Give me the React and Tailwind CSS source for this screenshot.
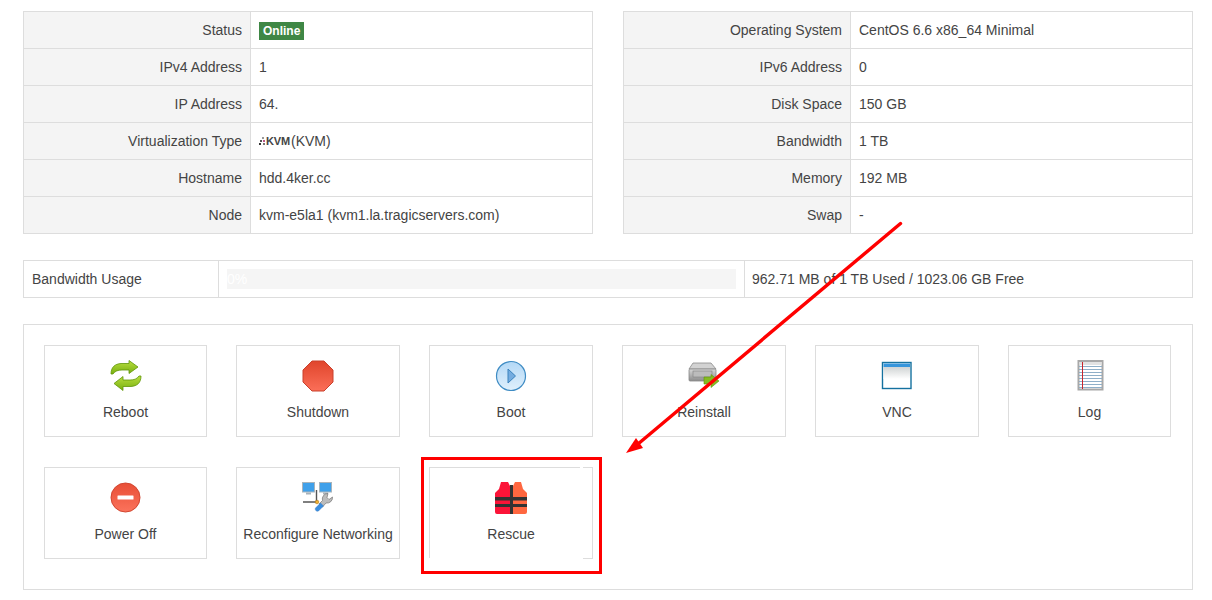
import React from "react";

const leftRows = [
  ["Status", <span className="inline-block bg-[#3f8745] px-[4px] text-[12px] leading-[18px] font-bold text-white">Online</span>],
  ["IPv4 Address", "1"],
  ["IP Address", "64."],
  ["Virtualization Type", <span className="flex items-center"><KvmLogo />(KVM)</span>],
  ["Hostname", "hdd.4ker.cc"],
  ["Node", "kvm-e5la1 (kvm1.la.tragicservers.com)"],
];

const rightRows = [
  ["Operating System", "CentOS 6.6 x86_64 Minimal"],
  ["IPv6 Address", "0"],
  ["Disk Space", "150 GB"],
  ["Bandwidth", "1 TB"],
  ["Memory", "192 MB"],
  ["Swap", "-"],
];

function KvmLogo() {
  return (
    <span className="flex w-[32px] items-center">
      <svg width="7" height="10" viewBox="0 0 7 10">
        <rect x="3" y="1" width="2" height="2" fill="#999" />
        <rect x="1" y="4" width="2" height="2" fill="#555" />
        <rect x="4" y="4" width="2" height="2" fill="#b58" />
        <rect x="0" y="7" width="2" height="2" fill="#333" />
        <rect x="4" y="7" width="2" height="2" fill="#777" />
      </svg>
      <span className="text-[11px] font-bold tracking-[-0.2px] text-[#444]">KVM</span>
    </span>
  );
}

function InfoTable({ rows }) {
  return (
    <table className="w-[570px] shrink-0 table-fixed border-collapse">
      <tbody>
        {rows.map(([label, value]) => (
          <tr key={label} className="h-[37px]">
            <td className="w-[227px] border border-[#ddd] bg-[#f4f4f4] pr-2 text-right">{label}</td>
            <td className="border border-[#ddd] pl-2">{value}</td>
          </tr>
        ))}
      </tbody>
    </table>
  );
}

function RebootIcon() {
  return (
    <svg width="32" height="32" viewBox="0 0 32 32">
      <defs>
        <linearGradient id="rb" x1="0" y1="0" x2="0" y2="1">
          <stop offset="0" stopColor="#b9de3e" />
          <stop offset="1" stopColor="#78b010" />
        </linearGradient>
      </defs>
      <path d="M1 14 C1 7 5 4 11 3.5 L19 3.5 L19 0.5 L28 7 L19 13.5 L19 10 L12 10 C8 10 5 11 3 14 Z" fill="url(#rb)" stroke="#5f9608" strokeWidth="0.8" />
      <path d="M31 16 C31 23 27 26 21 26.5 L13 26.5 L13 30.5 L4 23.5 L13 16.5 L13 20 L20 20 C24 20 27 19 29 16 Z" fill="url(#rb)" stroke="#5f9608" strokeWidth="0.8" />
    </svg>
  );
}

function ShutdownIcon() {
  return (
    <svg width="32" height="32" viewBox="0 0 32 32">
      <defs>
        <linearGradient id="sd" x1="0" y1="0" x2="0" y2="1">
          <stop offset="0" stopColor="#e0452c" />
          <stop offset="1" stopColor="#fb6f58" />
        </linearGradient>
      </defs>
      <path d="M10 1 L22 1 L31 10 L31 22 L22 31 L10 31 L1 22 L1 10 Z" fill="url(#sd)" stroke="#c9402c" strokeWidth="1" />
    </svg>
  );
}

function BootIcon() {
  return (
    <svg width="32" height="32" viewBox="0 0 32 32">
      <defs>
        <linearGradient id="bt" x1="0" y1="0" x2="0" y2="1">
          <stop offset="0" stopColor="#b3d8f6" />
          <stop offset="1" stopColor="#e0f0fc" />
        </linearGradient>
      </defs>
      <circle cx="16" cy="16" r="14.5" fill="url(#bt)" stroke="#3f8cc4" strokeWidth="1.2" />
      <path d="M13 9 L20.5 16 L13 23 Z" fill="#74ace0" stroke="#3a82bc" strokeWidth="1" />
    </svg>
  );
}

function ReinstallIcon() {
  return (
    <svg width="32" height="32" viewBox="0 0 32 32">
      <defs>
        <linearGradient id="ri" x1="0" y1="0" x2="0" y2="1">
          <stop offset="0" stopColor="#d8d8d8" />
          <stop offset="1" stopColor="#8c8c8c" />
        </linearGradient>
      </defs>
      <path d="M5 3 L23 3 L28 9 L1 9 Z" fill="#d2d2d2" stroke="#8c8c8c" strokeWidth="0.8" />
      <rect x="1" y="9" width="27" height="12" rx="1" fill="url(#ri)" stroke="#888" strokeWidth="0.8" />
      <rect x="5" y="11" width="19" height="6" fill="#bcbcbc" stroke="#808080" strokeWidth="0.6" />
      <path d="M16 17 L23 17 L23 14.5 L31 21 L23 27.5 L23 24 L16 24 Z" fill="#86bb22" stroke="#5f9608" strokeWidth="0.6" />
    </svg>
  );
}

function VncIcon() {
  return (
    <svg width="32" height="32" viewBox="0 0 32 32">
      <defs>
        <linearGradient id="vn" x1="0" y1="0" x2="0" y2="1">
          <stop offset="0" stopColor="#d0d4d4" />
          <stop offset="1" stopColor="#ffffff" />
        </linearGradient>
      </defs>
      <rect x="1.5" y="2.5" width="28.5" height="26" fill="#fff" stroke="#14719f" strokeWidth="1.4" />
      <rect x="2.5" y="3.5" width="26.5" height="3.5" fill="#3796dc" />
      <rect x="2.5" y="7" width="26.5" height="12" fill="url(#vn)" />
    </svg>
  );
}

function LogIcon() {
  const lines = [6, 9, 12, 15, 18, 21, 24, 27];
  return (
    <svg width="32" height="32" viewBox="0 0 32 32">
      <rect x="4.5" y="1" width="24" height="28.5" fill="#fff" stroke="#a8a8a8" strokeWidth="2" />
      <rect x="5.5" y="2" width="22" height="3" fill="#e2e2e2" />
      {lines.map((y) => (
        <rect key={y} x="5" y={y} width="23" height="1" fill="#8fafc8" />
      ))}
      <rect x="8" y="2" width="1" height="27" fill="#c8252c" />
    </svg>
  );
}

function PowerOffIcon() {
  return (
    <svg width="32" height="32" viewBox="0 0 32 32">
      <defs>
        <linearGradient id="po" x1="0" y1="0" x2="0" y2="1">
          <stop offset="0" stopColor="#e84e36" />
          <stop offset="1" stopColor="#fb735c" />
        </linearGradient>
      </defs>
      <circle cx="15.5" cy="15.5" r="14.5" fill="url(#po)" stroke="#d24630" strokeWidth="1" />
      <rect x="7.5" y="13.5" width="16" height="4" rx="0.5" fill="#fff" />
    </svg>
  );
}

function NetworkIcon() {
  return (
    <svg width="32" height="32" viewBox="0 0 32 32">
      <path d="M14.5 8 L14.5 20 M1 20 L15 20" stroke="#555" strokeWidth="1.4" fill="none" />
      <rect x="0.5" y="0.5" width="12" height="9.5" fill="#3fa0ea" stroke="#a8b4bc" strokeWidth="1" />
      <rect x="17.5" y="0.5" width="12" height="9.5" fill="#3fa0ea" stroke="#a8b4bc" strokeWidth="1" />
      <rect x="4" y="10.5" width="5" height="2" fill="#a8b2ba" />
      <rect x="21" y="10.5" width="5" height="2" fill="#a8b2ba" />
      <circle cx="15" cy="20" r="1.8" fill="#f0b030" stroke="#b07818" strokeWidth="0.6" />
      <path d="M26 11.5 A5.5 5.5 0 0 0 20.5 18.5 L17 22 L20.5 25 L24 21 A5.5 5.5 0 0 0 30.5 15 L27 17.5 L25 15.5 Z" fill="#bcbcbc" stroke="#777" strokeWidth="0.7" />
      <path d="M18.5 21 L13.5 26 C12.5 28 14.5 30 16.5 29 L21.5 24 Z" fill="#3a8ee0" stroke="#2f74bc" strokeWidth="0.4" />
    </svg>
  );
}

function VestIcon() {
  return (
    <svg width="32" height="32" viewBox="0 0 32 32">
      <path d="M6 0 L13 0 L15 4 L15 32 L2 32 Q0 32 0 30 L0 11 L4 7 Z" fill="#fb1438" />
      <path d="M26 0 L20 0 L18 4 L18 32 L30 32 Q32 32 32 30 L32 11 L28 7 Z" fill="#ff6740" />
      <rect x="15" y="3" width="3" height="29" fill="#333" />
      <rect x="0" y="15" width="32" height="3.5" fill="#333" />
      <rect x="0" y="22" width="32" height="3" fill="#333" />
    </svg>
  );
}

const actions = [
  ["Reboot", RebootIcon],
  ["Shutdown", ShutdownIcon],
  ["Boot", BootIcon],
  ["Reinstall", ReinstallIcon],
  ["VNC", VncIcon],
  ["Log", LogIcon],
  ["Power Off", PowerOffIcon],
  ["Reconfigure Networking", NetworkIcon],
  ["Rescue", VestIcon],
];

function ActionButton({ label, Icon }) {
  return (
    <div className="relative flex h-[92px] flex-col items-center border border-[#ddd] pt-[14px]">
      <Icon />
      <span className="mt-[10px] leading-[20px] whitespace-nowrap">{label}</span>
      {/* screenshot markup clips the border of this one */}
      {label === "Rescue" && (
        <>
          <span className="absolute top-[-1px] right-[9px] h-px w-[3px] bg-white" />
          <span className="absolute bottom-[-1px] left-[-1px] h-px w-[154px] bg-white" />
        </>
      )}
    </div>
  );
}

export default function App() {
  return (
    <div className="relative h-[600px] overflow-hidden bg-white pt-[11px] pl-[23px] font-['Liberation_Sans',Arial,sans-serif] text-[14px] text-[#444]">
      <div className="flex gap-[30px]">
        <InfoTable rows={leftRows} />
        <InfoTable rows={rightRows} />
      </div>

      <div className="mt-[26px] flex h-[38px] w-[1170px] items-center border border-[#ddd]">
        <div className="flex h-full w-[195px] items-center border-r border-[#ddd] pl-2">Bandwidth Usage</div>
        <div className="flex h-full w-[526px] items-center border-r border-[#ddd] pl-2">
          <div className="h-[20px] w-[509px] bg-[#f5f5f5] text-[14px] leading-[20px] text-white">0%</div>
        </div>
        <div className="pl-[7px]">962.71 MB of 1 TB Used / 1023.06 GB Free</div>
      </div>

      <div className="mt-[26px] h-[266px] w-[1170px] border border-[#ddd] pt-5 pl-5">
        <div className="grid grid-cols-[163px_164px_164px_164px_164px_163px] gap-x-[29px] gap-y-[30px]">
          {actions.map(([label, Icon]) => (
            <ActionButton key={label} label={label} Icon={Icon} />
          ))}
        </div>
      </div>

      <div className="absolute top-[457px] left-[421px] h-[117px] w-[181px] border-[3px] border-[#ff0000]" />
      <svg className="absolute top-0 left-0" width="1212" height="600" viewBox="0 0 1212 600">
        <line x1="900.5" y1="223.5" x2="638" y2="444" stroke="#ff0000" strokeWidth="3.4" strokeLinecap="round" />
        <path d="M626 453 L636 438 L643 448 Z" fill="#ff0000" />
      </svg>
    </div>
  );
}
